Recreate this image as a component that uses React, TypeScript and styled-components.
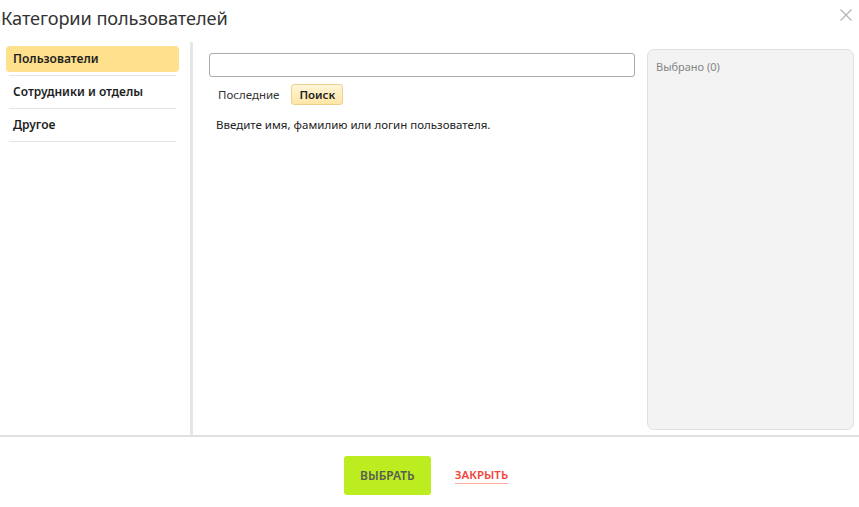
import React, { useState } from 'react';
import styled, { createGlobalStyle } from 'styled-components';

const GlobalStyle = createGlobalStyle`
  html, body {
    margin: 0;
    padding: 0;
    background: #fff;
  }
  body {
    font-family: 'Noto Sans', 'Open Sans', Arial, sans-serif;
    color: #222;
  }
`;

const categories = ['Пользователи', 'Сотрудники и отделы', 'Другое'];

const App = () => {
  const [active, setActive] = useState(0);
  const [tab, setTab] = useState<'recent' | 'search'>('search');

  return (
    <>
      <GlobalStyle />
      <Dialog>
        <Header>
          <Title>Категории пользователей</Title>
          <CloseButton aria-label='close'>
            <svg width='12' height='12' viewBox='0 0 12 12'>
              <path d='M0.5 0.5 L11.5 11.5 M11.5 0.5 L0.5 11.5' stroke='#b4b4b4' strokeWidth='1.2' />
            </svg>
          </CloseButton>
        </Header>

        <Body>
          <Sidebar>
            {categories.map((name, i) => (
              <CategoryRow key={name}>
                <CategoryLabel $active={i === active} onClick={() => setActive(i)}>
                  {name}
                </CategoryLabel>
              </CategoryRow>
            ))}
          </Sidebar>

          <Main>
            <SearchInput type='text' />
            <Tabs>
              <Tab $active={tab === 'recent'} onClick={() => setTab('recent')}>
                Последние
              </Tab>
              <Tab $active={tab === 'search'} onClick={() => setTab('search')}>
                Поиск
              </Tab>
            </Tabs>
            <Hint>Введите имя, фамилию или логин пользователя.</Hint>
          </Main>

          <Selected>
            <SelectedTitle>Выбрано (0)</SelectedTitle>
          </Selected>
        </Body>

        <Footer>
          <PrimaryButton>Выбрать</PrimaryButton>
          <LinkButton>Закрыть</LinkButton>
        </Footer>
      </Dialog>
    </>
  );
};

const Dialog = styled.div`
  width: 859px;
  height: 507px;
  display: flex;
  flex-direction: column;
  background: #fff;
`;

const Header = styled.div`
  height: 42px;
  display: flex;
  align-items: flex-start;
  justify-content: space-between;
  padding: 0 7px 0 1px;
  box-sizing: border-box;
`;

const Title = styled.h1`
  margin: 6px 0 0;
  font-size: 18.2px;
  font-weight: 400;
  line-height: 24px;
  color: #333;
  letter-spacing: -0.1px;
`;

const CloseButton = styled.button`
  margin-top: 9px;
  padding: 0;
  border: 0;
  background: transparent;
  width: 12px;
  height: 12px;
  display: flex;
  cursor: pointer;
`;

const Body = styled.div`
  height: 393px;
  display: flex;
`;

const Sidebar = styled.div`
  width: 184px;
  padding: 1px 0 0 6px;
  border-right: 3px solid #e6e6e6;
  box-sizing: content-box;
`;

const CategoryRow = styled.div`
  width: 167px;
  margin: 0 3px;
  padding: 3px 0;
  border-bottom: 1px solid #e3e3e3;
`;

const CategoryLabel = styled.div<{ $active: boolean }>`
  margin: 0 -3px;
  height: 26px;
  line-height: 26px;
  padding: 0 7px;
  border-radius: 4px;
  font-size: 12px;
  font-weight: 600;
  color: #1e1e1e;
  cursor: pointer;
  background: ${(p) => (p.$active ? '#ffe08c' : 'transparent')};
`;

const Main = styled.div`
  flex: 1;
  padding: 11px 12px 0 16px;
  display: flex;
  flex-direction: column;
  align-items: flex-start;
`;

const SearchInput = styled.input`
  width: 426px;
  height: 24px;
  box-sizing: border-box;
  border: 1px solid #ababab;
  border-radius: 3px;
  outline: none;
  padding: 0 6px;
  font: inherit;
  font-size: 12px;
`;

const Tabs = styled.div`
  margin-top: 7px;
  margin-left: 1px;
  display: flex;
  gap: 4px;
`;

const Tab = styled.button<{ $active: boolean }>`
  height: 21px;
  padding: 0 7px;
  font-family: inherit;
  font-size: 11.5px;
  font-weight: ${(p) => (p.$active ? 600 : 400)};
  color: ${(p) => (p.$active ? '#222' : '#333')};
  border-radius: 3px;
  border: 1px solid ${(p) => (p.$active ? '#ecd08e' : 'transparent')};
  background: ${(p) =>
    p.$active ? 'linear-gradient(#fff5d6, #ffe6a6)' : 'transparent'};
  cursor: pointer;
`;

const Hint = styled.p`
  margin: 12px 0 0 7px;
  font-size: 11.5px;
  line-height: 16px;
  color: #222;
`;

const Selected = styled.div`
  width: 207px;
  margin: 7px 5px 5px 0;
  background: #f3f3f3;
  border: 1px solid #e0e0e0;
  border-radius: 7px;
  padding: 10px 8px;
  box-sizing: border-box;
`;

const SelectedTitle = styled.div`
  font-size: 11px;
  line-height: 14px;
  color: #858585;
`;

const Footer = styled.div`
  flex: 1;
  border-top: 2px solid #e0e0e0;
  display: flex;
  align-items: flex-start;
  justify-content: center;
  gap: 24px;
  padding: 19px 7px 0 0;
`;

const PrimaryButton = styled.button`
  width: 87px;
  height: 39px;
  border: 0;
  border-radius: 3px;
  background: #bbed21;
  color: #585d52;
  font-family: 'Noto Sans', Arial, sans-serif;
  font-size: 12px;
  font-weight: 600;
  text-transform: uppercase;
  cursor: pointer;
`;

const LinkButton = styled.button`
  margin-top: 11px;
  padding: 0 0 1px;
  border: 0;
  border-bottom: 1px solid #f9a89a;
  background: transparent;
  color: #f2453a;
  font-family: 'Noto Sans', Arial, sans-serif;
  font-size: 11.5px;
  font-weight: 600;
  line-height: 15px;
  text-transform: uppercase;
  cursor: pointer;
`;

export default App;
